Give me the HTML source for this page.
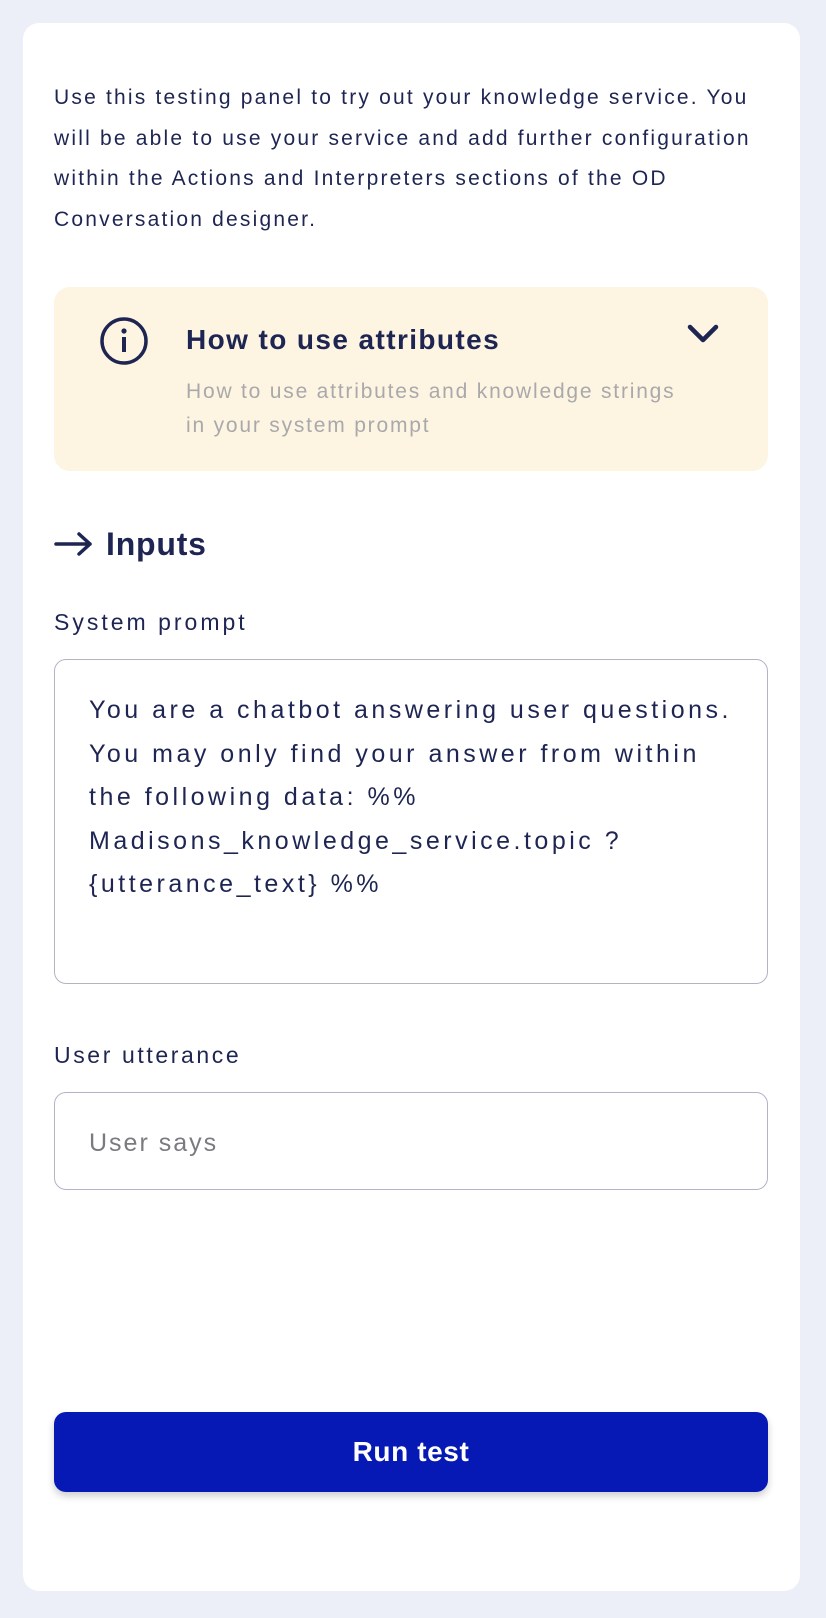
<!DOCTYPE html>
<html><head><meta charset="utf-8"><style>
body{margin:0;width:826px;height:1618px;background:#eceef8;font-family:"Liberation Sans",sans-serif;color:#1e2552;position:relative;overflow:hidden}
.card{position:absolute;left:23px;top:23px;width:777px;height:1568px;background:#fff;border-radius:16px}
.a{position:absolute;white-space:nowrap}
</style></head><body>
<div class="card"></div>
<div class="a" style="left:54px;top:78px;font-size:21px;line-height:40.7px;letter-spacing:2.2px">Use this testing panel to try out your knowledge service. You<br>will be able to use your service and add further configuration<br>within the Actions and Interpreters sections of the OD<br>Conversation designer.</div>
<div class="a" style="left:54px;top:287px;width:714px;height:184px;background:#fdf5e2;border-radius:16px"></div>
<svg class="a" style="left:99px;top:316px" width="50" height="50" viewBox="0 0 50 50"><circle cx="25" cy="25" r="22" fill="none" stroke="#1e2552" stroke-width="3.5"/><circle cx="25" cy="15" r="2.6" fill="#1e2552"/><rect x="23" y="21" width="4" height="15" fill="#1e2552"/></svg>
<div class="a" style="left:186px;top:323px;font-size:28px;font-weight:bold;line-height:34px;letter-spacing:1.4px">How to use attributes</div>
<svg class="a" style="left:686px;top:322px" width="34" height="24" viewBox="0 0 34 24"><path d="M4 5 L17 18 L30 5" fill="none" stroke="#1e2552" stroke-width="4.5" stroke-linecap="round" stroke-linejoin="round"/></svg>
<div class="a" style="left:186px;top:375px;font-size:21px;line-height:34px;color:#a9a9ab;letter-spacing:1.8px">How to use attributes and knowledge strings<br>in your system prompt</div>
<svg class="a" style="left:54px;top:530px" width="40" height="28" viewBox="0 0 40 28"><path d="M2 14 H36 M25 4 L36 14 L25 24" fill="none" stroke="#1e2552" stroke-width="3.5" stroke-linecap="round" stroke-linejoin="round"/></svg>
<div class="a" style="left:106px;top:524px;font-size:32px;font-weight:bold;line-height:40px;letter-spacing:0.8px">Inputs</div>
<div class="a" style="left:54px;top:607px;font-size:23px;line-height:30px;letter-spacing:3px">System prompt</div>
<div class="a" style="left:54px;top:659px;width:712px;height:323px;border:1.5px solid #b3b3c8;border-radius:12px"></div>
<div class="a" style="left:89px;top:689px;font-size:25px;line-height:43.5px;letter-spacing:3.5px">You are a chatbot answering user questions.<br>You may only find your answer from within<br>the following data: %%<br>Madisons_knowledge_service.topic ?<br>{utterance_text} %%</div>
<div class="a" style="left:54px;top:1040px;font-size:23px;line-height:30px;letter-spacing:2.6px">User utterance</div>
<div class="a" style="left:54px;top:1092px;width:712px;height:96px;border:1.5px solid #b3b3c8;border-radius:12px"></div>
<div class="a" style="left:89px;top:1127px;font-size:25px;line-height:32px;color:#7a7a80;letter-spacing:2px">User says</div>
<div class="a" style="left:54px;top:1412px;width:714px;height:80px;background:#0619b5;border-radius:12px;box-shadow:0 4px 8px rgba(0,0,0,0.2);color:#fff;font-size:28px;font-weight:bold;text-align:center;line-height:80px;letter-spacing:0.6px">Run test</div>
</body></html>
